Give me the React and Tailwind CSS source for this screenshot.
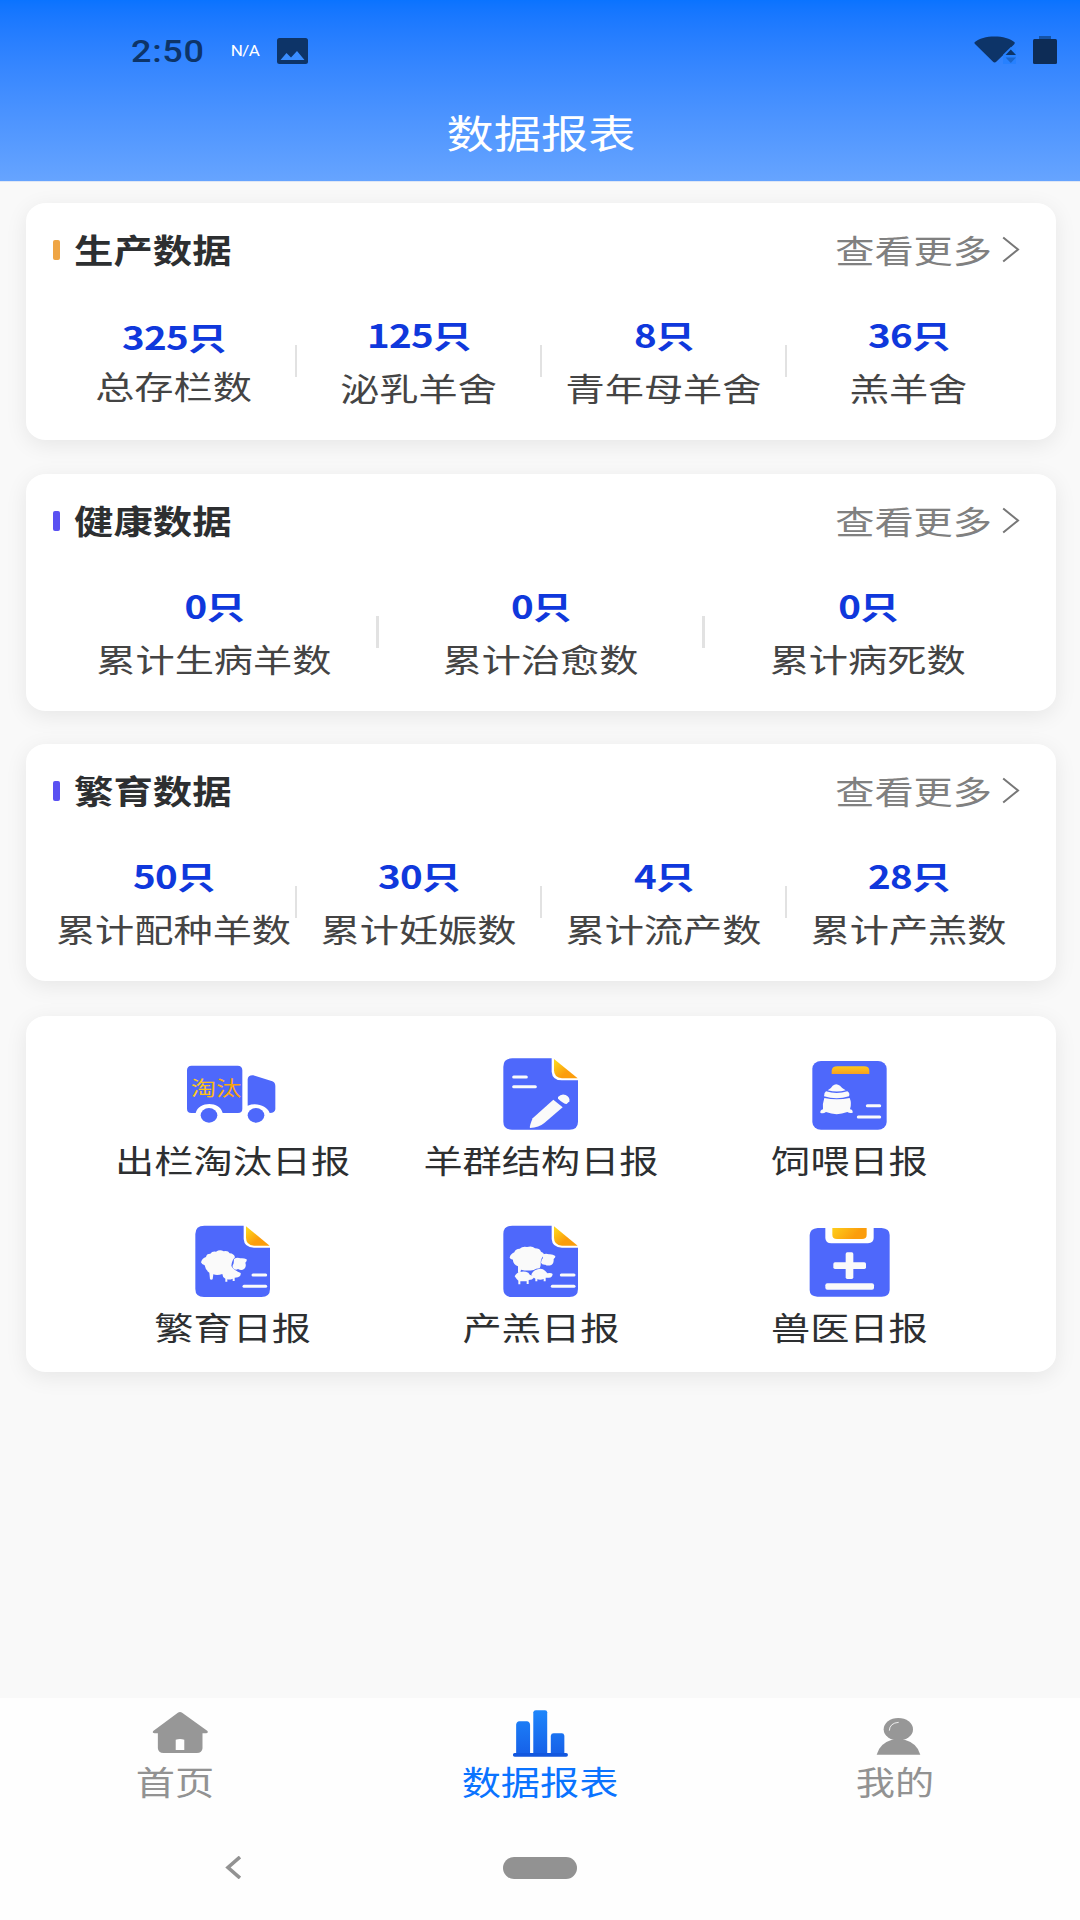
const sections = [
  {
    title: '生产数据',
    marker: 'bg-[#efa544]',
    cols: 'grid-cols-4',
    divider: 'w-[2px]',
    items: [
      { value: 325, label: '总存栏数', tight: true },
      { value: 125, label: '泌乳羊舍' },
      { value: 8, label: '青年母羊舍' },
      { value: 36, label: '羔羊舍' }
    ]
  },
  {
    title: '健康数据',
    marker: 'bg-[#5a51f2]',
    cols: 'grid-cols-3',
    divider: 'w-[3px]',
    items: [
      { value: 0, label: '累计生病羊数' },
      { value: 0, label: '累计治愈数' },
      { value: 0, label: '累计病死数' }
    ]
  },
  {
    title: '繁育数据',
    marker: 'bg-[#5a51f2]',
    cols: 'grid-cols-4',
    divider: 'w-[2px]',
    items: [
      { value: 50, label: '累计配种羊数' },
      { value: 30, label: '累计妊娠数' },
      { value: 4, label: '累计流产数' },
      { value: 28, label: '累计产羔数' }
    ]
  }
];

function TruckIcon() {
  return (
    <svg className="w-24 h-[78px]" viewBox="255 75 288 234">
      <defs>
        <linearGradient id="truckText" x1="0" x2="1">
          <stop offset="0" stopColor="#fdd01c" />
          <stop offset="1" stopColor="#fb9a0a" />
        </linearGradient>
      </defs>
      <path
        fill="#4e68fb"
        d="M275 107H413Q427 107 427 121V236Q427 249 414 249H368C360 213 296 213 287 249H274Q261 249 261 236V121Q261 107 275 107Z"
      />
      <path
        fill="#4e68fb"
        d="M443 148Q444 135 460 136L517 154Q526 158 526 168V238Q525 249 509 249C502 229 471 216 443 227Z"
      />
      <ellipse cx="327" cy="256" rx="25" ry="22" fill="#4e68fb" />
      <ellipse cx="468" cy="256" rx="25" ry="22" fill="#4e68fb" />
      <text x="272" y="241" fontSize="76" textLength="152" fill="url(#truckText)" transform="scale(1 .82)">
        淘汰
      </text>
    </svg>
  );
}

// Blue sheet with a folded corner, shared by three of the reports
function Sheet({ x, y, id }) {
  return (
    <g transform={`translate(${x} ${y})`}>
      <defs>
        <linearGradient id={id} x1="0" y1="0" x2="1" y2="1">
          <stop offset="0.1" stopColor="#fdd41c" />
          <stop offset="0.6" stopColor="#fb9d0c" />
        </linearGradient>
      </defs>
      <path
        fill="#4e68fb"
        d="M27 0H145V40Q147 66 176 66H224V190Q224 214 198 214H26Q0 214 0 190V25Q0 0 27 0Z"
      />
      <path fill={`url(#${id})`} d="M152 2L223 60H176Q152 58 152 36Z" />
    </g>
  );
}

function StructureIcon() {
  return (
    <svg className="w-24 h-[78px]" viewBox="248 74 288 234">
      <Sheet x={279} y={84} id="fold1" />
      <g stroke="#fafafa" strokeWidth="9" strokeLinecap="round">
        <path d="M310 140H348" />
        <path d="M310 169H375" />
      </g>
      <path fill="#fafafa" d="M429 208L457 231L402 278Q386 291 359 293Q356 290 367 264Z" />
      <path fill="#fafafa" d="M443 200Q453 189 466 194Q480 201 477 213L469 221Q459 220 443 205Z" />
    </svg>
  );
}

function FeedIcon() {
  return (
    <svg className="w-24 h-[78px]" viewBox="243 75 288 234">
      <defs>
        <linearGradient id="feedClip" x1="0" y1="0" x2="0" y2="1">
          <stop offset="0" stopColor="#fdc81b" />
          <stop offset="1" stopColor="#f8a021" />
        </linearGradient>
      </defs>
      <rect x="277" y="93" width="223" height="206" rx="26" ry="23" fill="#4e68fb" />
      <path fill="url(#feedClip)" d="M335 132V122Q336 109 352 109H432Q448 109 448 122V132Z" />
      <g fill="#fafafa">
        <path d="M323 181Q333 176 338 167Q348 158 360 167Q366 175 377 181Q351 188 323 181Z" />
        <path d="M318 184Q350 194 382 184Q391 190 387 199Q350 211 312 199Q311 189 318 184Z" />
        <path d="M313 204Q350 212 389 204Q396 220 390 238Q399 239 398 248Q390 251 382 246Q350 259 318 246Q309 252 301 248Q300 241 309 238Q307 221 313 204Z" />
      </g>
      <g stroke="#fafafa" strokeWidth="9" strokeLinecap="round">
        <path d="M442 227H479" />
        <path d="M415 261H479" />
      </g>
    </svg>
  );
}

function BreedingIcon() {
  return (
    <svg className="w-24 h-[78px]" viewBox="255 576 288 234">
      <Sheet x={286} y={587} id="fold2" />
      <g fill="#fafafa">
        <path d="M303 697Q307 684 318 681Q319 671 331 671Q336 663 348 665Q360 657 371 664Q384 661 389 670Q402 671 405 682Q395 692 394 708Q398 716 405 720Q414 726 422 729Q424 739 414 742L404 743V753H398V746Q389 750 382 748V755H376V746Q367 741 367 732Q352 737 340 733L338 748Q334 750 330 748L328 728Q316 720 314 706Q306 705 303 697Z" />
        <path d="M402 687Q411 681 421 685Q430 683 440 688Q442 693 436 698Q440 709 433 716Q425 723 414 717Q406 722 399 714Q396 707 401 700Z" />
      </g>
      <g stroke="#fafafa" strokeWidth="9" strokeLinecap="round">
        <path d="M459 735H497" />
        <path d="M432 769H497" />
      </g>
    </svg>
  );
}

function LambingIcon() {
  return (
    <svg className="w-24 h-[78px]" viewBox="248 576 288 234">
      <Sheet x={279} y={587} id="fold3" />
      <g fill="#fafafa">
        {/* ewe */}
        <path d="M298 683Q300 672 312 667Q315 656 328 656Q337 648 350 651Q365 646 374 655Q388 655 392 665Q402 668 401 676Q391 686 391 699Q392 708 388 715Q376 715 370 720Q350 724 332 719L330 728H323V709Q307 702 308 689Q300 688 298 683Z" />
        <path d="M397 674Q406 669 416 673Q427 672 435 678Q436 683 430 687Q431 701 423 705Q411 709 405 704Q395 705 392 698Q393 688 398 684Z" />
        {/* lambs */}
        <path d="M313 739Q318 728 329 726Q342 722 354 728L359 735Q369 735 371 743Q366 750 355 750V762H349V754H330V763H324V752Q318 747 313 739Z" />
        <path d="M363 733Q369 720 382 718Q394 712 405 723L411 730Q422 727 427 732Q426 743 416 743L406 743V754H400V747Q391 751 381 748V754H375V746Q367 743 363 733Z" />
      </g>
      <g stroke="#fafafa" strokeWidth="9" strokeLinecap="round">
        <path d="M453 735H491" />
        <path d="M426 769H491" />
      </g>
    </svg>
  );
}

function VetIcon() {
  return (
    <svg className="w-24 h-[78px]" viewBox="243 576 288 234">
      <defs>
        <linearGradient id="vetClip" x1="0" x2="1" y1="0" y2="0.3">
          <stop offset="0" stopColor="#fdce1c" />
          <stop offset="0.8" stopColor="#fb9d0c" />
        </linearGradient>
      </defs>
      <path
        fill="#4e68fb"
        d="M293 594H316V624Q317 640 334 640H444Q461 639 461 624V594H485Q509 596 509 615V780Q508 800 485 800H292Q269 799 269 780V615Q270 596 293 594Z"
      />
      <path fill="url(#vetClip)" d="M337 594H440V614Q440 627 426 627H351Q337 627 337 614Z" />
      <rect x="377" y="667" width="23" height="80" rx="5" fill="#fafafa" />
      <rect x="340" y="697" width="98" height="20" rx="5" fill="#fafafa" />
      <rect x="316" y="760" width="146" height="19" rx="6" fill="#fafafa" />
    </svg>
  );
}

const reports = [
  { name: '出栏淘汰日报', icon: TruckIcon },
  { name: '羊群结构日报', icon: StructureIcon },
  { name: '饲喂日报', icon: FeedIcon },
  { name: '繁育日报', icon: BreedingIcon },
  { name: '产羔日报', icon: LambingIcon },
  { name: '兽医日报', icon: VetIcon }
];

function HomeIcon() {
  return (
    <svg className="w-[72px] h-[51px]" viewBox="123.2 54 201.6 153" preserveAspectRatio="none">
      <path
        fill="#979797"
        fillRule="evenodd"
        d="M218 68Q224 64 230 68L301 123Q304 129 297 130H287V175Q286 189 271 189H178Q163 189 162 175V130H153Q145 129 149 123ZM212 149V180H236V149Q224 145 212 149Z"
      />
    </svg>
  );
}

function ChartIcon() {
  return (
    <svg className="w-[72px] h-[51px]" viewBox="1131 54 201.6 153" preserveAspectRatio="none">
      <defs>
        <linearGradient id="bars" gradientUnits="userSpaceOnUse" x1="0" y1="60" x2="0" y2="195">
          <stop offset="0" stopColor="#1e86fb" />
          <stop offset="1" stopColor="#1660e8" />
        </linearGradient>
      </defs>
      <g fill="url(#bars)">
        <path d="M1165 192V104Q1166 95 1174 94H1195Q1203 95 1204 104V192Z" />
        <path d="M1213 192V67Q1214 61 1220 61H1246Q1252 61 1252 67V192Z" />
        <path d="M1262 192V137Q1263 130 1270 130H1293Q1299 130 1300 137V192Z" />
      </g>
      <rect x="1156" y="189" width="154" height="11" rx="5" fill="#1257de" />
    </svg>
  );
}

function UserIcon() {
  return (
    <svg className="w-[72px] h-[51px]" viewBox="612 54 216 153">
      <ellipse cx="715" cy="118" rx="44" ry="34" fill="#979797" />
      <path fill="#979797" d="M694 150H736Q772 160 781 194H650Q659 160 694 150Z" />
      <path d="M688 122Q689 99 716 97" fill="none" stroke="#fff" strokeWidth="2.5" />
    </svg>
  );
}

const tabs = [
  { name: '首页', icon: HomeIcon, style: 'text-[#929292] mr-[10px]' },
  { name: '数据报表', icon: ChartIcon, style: 'text-[#0a73ff]' },
  { name: '我的', icon: UserIcon, style: 'text-[#929292] mr-[10px]' }
];

function StatusBar() {
  return (
    <div className="h-[103px] flex items-center pl-[131px] pr-[23px] text-[#0d3468]">
      <span className="font-[Roboto] font-medium text-[36px] leading-none tracking-[0.7px] scale-y-[0.86]">2:50</span>
      <span className="ml-[26px] w-[29px] font-[Roboto] text-[17px] leading-none tracking-[-0.5px] text-white scale-y-[0.86]">
        N/A
      </span>
      <svg className="ml-[17px] -mt-[2px] w-[31px] h-[26px]" viewBox="0 0 31 26">
        <rect width="31" height="26" rx="2.5" fill="currentColor" />
        <path d="M3.5 22L9.5 15L14 19.5L20 13L27.5 22Z" fill="#3a8dff" />
      </svg>
      <div className="ml-auto flex items-start gap-[17px] -mt-[3px]">
        <svg className="w-[42px] h-[28px]" viewBox="0 0 42 28">
          <path
            fill="currentColor"
            d="M.6 6.3C9 -1.6 32 -1.6 40.6 6.3Q41 7.5 40 8.4L22.5 25.6Q20.6 27.4 18.8 25.6L1 8Q.2 7.2 .6 6.3Z"
          />
          <path fill="#2681ff" d="M36.8 11L29 18.8V28H42V12Z" opacity=".9" />
          <path fill="currentColor" d="M31.6 19L36.8 13.5L42 19Z" />
          <path fill="#1a66cd" d="M31.6 21.5L36.8 27L42 21.5Z" />
        </svg>
        <svg className="w-[24px] h-[28px]" viewBox="0 0 24 28">
          <rect x="6" width="12" height="4" fill="#1553a6" />
          <rect y="3" width="24" height="25" rx="1.5" fill="#0d2c56" />
        </svg>
      </div>
    </div>
  );
}

function Stat({ item, divider, last }) {
  return (
    <div className="flex items-start">
      <div className="flex-1 min-w-0 flex flex-col items-center whitespace-nowrap">
        <span
          className={`h-[40px] leading-[40px] pl-px text-[38.5px] font-bold tracking-[-0.7px] text-[#0f38dc] scale-y-[0.83] ${
            item.tight ? 'mt-[2px] mb-[9px]' : 'mb-[13px]'
          }`}
        >
          {item.value}只
        </span>
        <span className="h-[40px] leading-[40px] text-[#444] scale-y-[0.82]">{item.label}</span>
      </div>
      {!last && <div className={`${divider} h-[32px] mt-[31px] -ml-px -mr-px bg-[#e2e2e2]`} />}
    </div>
  );
}

function DataCard({ section }) {
  return (
    <section className="h-[237px] pt-[26px] px-[25px] bg-white rounded-[20px/18px] shadow-[0_5px_22px_rgba(0,0,0,0.08)]">
      <div className="flex items-center h-[40px] pl-[2px] pr-[11px]">
        <div className={`w-[7px] h-[20px] mt-[2px] rounded-[2px] ${section.marker}`} />
        <h2 className="ml-[14px] leading-[40px] text-[39.4px] font-bold text-[#2d2f31] scale-y-[0.83]">
          {section.title}
        </h2>
        <span className="ml-auto leading-[40px] text-[#808080] scale-y-[0.82]">查看更多</span>
        <svg className="ml-[10px] mt-px w-[18px] h-[27px]" viewBox="0 0 18 27">
          <path d="M1.2 1.5L16 13.5L1.2 25.5" fill="none" stroke="#777" strokeWidth="2" />
        </svg>
      </div>
      <div className={`grid ${section.cols} mt-[45px]`}>
        {section.items.map((item, index) => (
          <Stat key={item.label} item={item} divider={section.divider} last={index === section.items.length - 1} />
        ))}
      </div>
    </section>
  );
}

export default function App() {
  return (
    <div className="w-[1080px] h-[1920px] flex flex-col overflow-hidden bg-[#f9f9f9] text-[39.2px] font-['Noto_Sans_CJK_SC',sans-serif]">
      <header className="h-[182px] shrink-0 bg-linear-to-b from-[#0a73ff] to-[#66a4ff] border-b border-[#dfe7f5]">
        <StatusBar />
        <h1 className="h-[58px] leading-[56px] pl-[2px] text-center text-[47.2px] text-white scale-y-[0.83]">
          数据报表
        </h1>
      </header>

      <main className="flex-1 flex flex-col gap-[33.5px] pt-[21px] pl-[26px] pr-[24px]">
        {sections.map((section) => (
          <DataCard key={section.title} section={section} />
        ))}

        {/* Informes diarios */}
        <section className="mt-px h-[356px] pt-[39px] px-[52.5px] grid grid-cols-3 content-start gap-y-[43px] bg-white rounded-[20px/18px] shadow-[0_5px_22px_rgba(0,0,0,0.08)]">
          {reports.map((report) => {
            const Icon = report.icon;
            return (
              <div key={report.name} className="flex flex-col items-center">
                <Icon />
                <span className="mt-[6px] h-[40px] leading-[40px] whitespace-nowrap text-[#2d2f31] scale-y-[0.82]">
                  {report.name}
                </span>
              </div>
            );
          })}
        </section>
      </main>

      <footer className="h-[222px] shrink-0 bg-[#fefefe] pt-[10px]">
        <nav className="grid grid-cols-3">
          {tabs.map((tab) => {
            const Icon = tab.icon;
            return (
              <div key={tab.name} className="flex flex-col items-center">
                <Icon />
                <span className={`mt-[2px] h-[40px] leading-[40px] scale-y-[0.84] ${tab.style}`}>{tab.name}</span>
              </div>
            );
          })}
        </nav>
        <div className="mt-[55px] flex items-center pl-[225px]">
          <svg className="w-[16px] h-[23px]" viewBox="0 0 16 23">
            <path d="M15 1L3 11.5L15 22" fill="none" stroke="#929292" strokeWidth="3.6" />
          </svg>
          <div className="ml-[262px] w-[74px] h-[22px] rounded-full bg-[#929292]" />
        </div>
      </footer>
    </div>
  );
}
